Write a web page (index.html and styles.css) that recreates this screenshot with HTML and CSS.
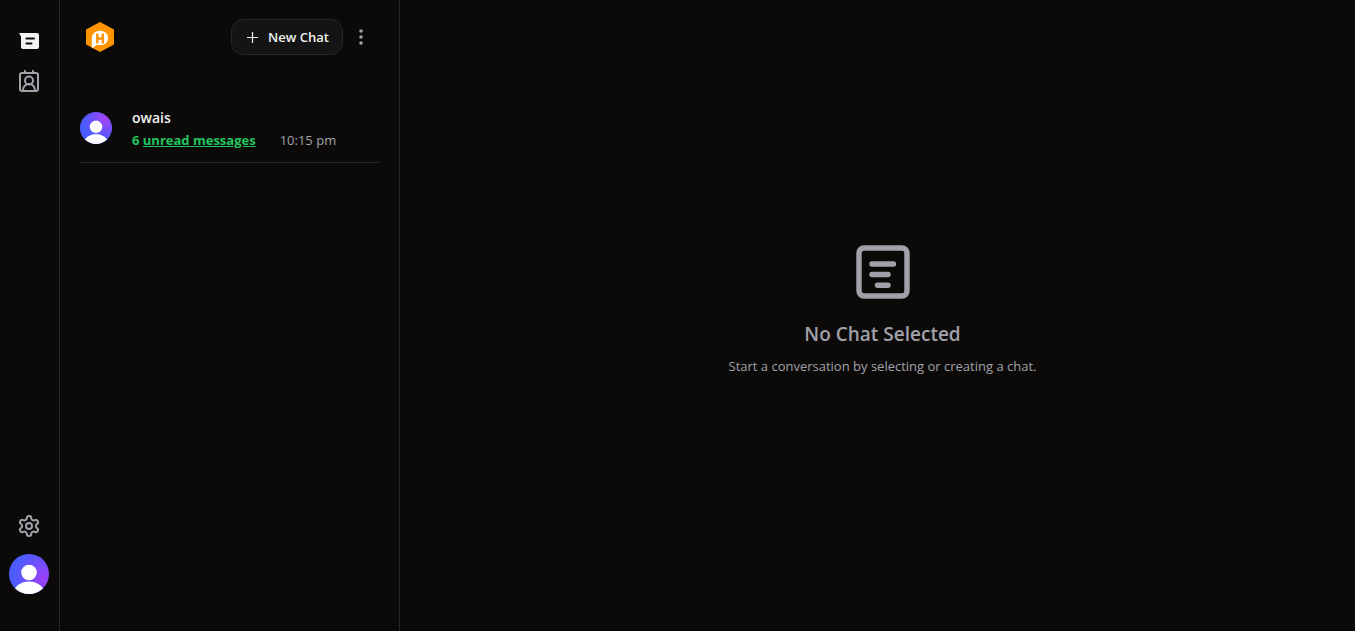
FILE: index.html
```html
<!DOCTYPE html>
<html lang="en">
<head>
<meta charset="utf-8">
<meta name="viewport" content="width=device-width, initial-scale=1">
<title>Chats</title>
<link rel="stylesheet" href="styles.css">
</head>
<body>
<div class="app">
  <nav class="rail" aria-label="Main">
    <a class="rail-link active" href="#chats" aria-label="Chats">
      <svg width="24" height="24" viewBox="0 0 24 24"><path fill="currentColor" d="M2 4h18a2 2 0 0 1 2 2v12a2 2 0 0 1-2 2H6a2 2 0 0 1-2-2V7.500z"/><path d="M9.500 9.500h7.500M9.500 14.500h5" fill="none" stroke="#0c0a09" stroke-width="2" stroke-linecap="round"/></svg>
    </a>
    <a class="rail-link" href="#contacts" aria-label="Contacts">
      <svg width="24" height="24" viewBox="0 0 24 24" fill="none" stroke="currentColor" stroke-width="2" stroke-linecap="round" stroke-linejoin="round"><rect x="3" y="4" width="18" height="18" rx="2"/><path d="M8 2v2M16 2v2M6 22v-1a6 6 0 0 1 12 0v1"/><circle cx="12" cy="11.500" r="4"/></svg>
    </a>
    <a class="rail-link settings" href="#settings" aria-label="Settings">
      <svg width="24" height="24" viewBox="0 0 24 24" fill="none" stroke="currentColor" stroke-width="2" stroke-linejoin="round"><path d="M12.220 2h-.44a2 2 0 0 0-2 2v.18a2 2 0 0 1-1 1.730l-.43.25a2 2 0 0 1-2 0l-.15-.08a2 2 0 0 0-2.730.73l-.22.38a2 2 0 0 0 .73 2.730l.15.1a2 2 0 0 1 1 1.720v.51a2 2 0 0 1-1 1.740l-.15.09a2 2 0 0 0-.73 2.730l.22.38a2 2 0 0 0 2.730.73l.15-.08a2 2 0 0 1 2 0l.43.25a2 2 0 0 1 1 1.730V20a2 2 0 0 0 2 2h.44a2 2 0 0 0 2-2v-.18a2 2 0 0 1 1-1.730l.43-.25a2 2 0 0 1 2 0l.15.08a2 2 0 0 0 2.730-.73l.22-.39a2 2 0 0 0-.73-2.730l-.15-.08a2 2 0 0 1-1-1.740v-.5a2 2 0 0 1 1-1.740l.15-.09a2 2 0 0 0 .73-2.730l-.22-.38a2 2 0 0 0-2.730-.73l-.15.08a2 2 0 0 1-2 0l-.43-.25a2 2 0 0 1-1-1.730V4a2 2 0 0 0-2-2z"/><circle cx="12" cy="12" r="3"/></svg>
    </a>
    <button class="profile" type="button" aria-label="Your profile">
      <svg width="40" height="40" viewBox="0 0 40 40"><defs><radialGradient id="me" cx="0.850" cy="0.600" r="0.750"><stop offset="0" stop-color="#9d40f8"/><stop offset="1" stop-color="#4a5cff"/></radialGradient><clipPath id="meClip"><circle cx="20" cy="20" r="20"/></clipPath></defs><g clip-path="url(#meClip)"><rect width="40" height="40" fill="url(#me)"/><circle cx="20" cy="18.500" r="7.800" fill="#fff"/><ellipse cx="20" cy="39" rx="15" ry="11.500" fill="#fff"/></g></svg>
    </button>
  </nav>

  <aside class="chats">
    <header class="chats-head">
      <svg class="logo" width="40" height="40" viewBox="0 0 40 40" role="img" aria-label="Logo"><path fill="#ff9500" d="M20 5l14 7.500v15L20 35 6 27.500v-15z"/><ellipse cx="20" cy="21" rx="8.200" ry="7.300" fill="#fff"/><path fill="#fff" d="M11.800 21v10.500l5.500-4z"/><path d="M17.300 16.500v10M22.900 16.500v10M17.300 21.500h5.600" fill="none" stroke="#ff9500" stroke-width="2.400"/></svg>
      <div class="actions">
        <button class="new-chat" type="button"><svg width="14" height="14" viewBox="0 0 14 14"><path d="M7.500 2v11M2 7.500h11" stroke="currentColor" stroke-width="1.200" fill="none"/></svg>New Chat</button>
        <button class="more" type="button" aria-label="More options"><svg width="24" height="24" viewBox="0 0 24 24" fill="currentColor"><circle cx="12" cy="6" r="1.800"/><circle cx="12" cy="12" r="1.800"/><circle cx="12" cy="18" r="1.800"/></svg></button>
      </div>
    </header>
    <a class="chat" href="#owais">
      <svg width="32" height="32" viewBox="0 0 40 40"><defs><radialGradient id="them" cx="0.800" cy="0.200" r="0.700"><stop offset="0" stop-color="#a344f8"/><stop offset="1" stop-color="#4a5cff"/></radialGradient></defs><g clip-path="url(#meClip)"><rect width="40" height="40" fill="url(#them)"/><circle cx="20" cy="18.500" r="7.800" fill="#fff"/><ellipse cx="20" cy="39" rx="15" ry="11.500" fill="#fff"/></g></svg>
      <span class="chat-body">
        <span class="name">owais</span>
        <span class="meta"><span class="unread">6 <u>unread messages</u></span><time class="time">10:15 pm</time></span>
      </span>
    </a>
  </aside>

  <main class="empty">
    <svg width="64" height="64" viewBox="0 0 64 64" fill="none" stroke="currentColor" stroke-linecap="round"><rect x="8" y="8" width="48" height="48" rx="5" stroke-width="5.400"/><path d="M21 24h21.500M21 34.500h16M26.500 45.300h10.500" stroke-width="5.400"/></svg>
    <h1>No Chat Selected</h1>
    <p>Start a conversation by selecting or creating a chat.</p>
  </main>
</div>
</body>
</html>
```
FILE: styles.css
```css
* { box-sizing: border-box; }

body {
  margin: 0;
  background: #0c0a09;
  color: #f2f2f2;
  font-family: "Segoe UI", "Open Sans", "Noto Sans", sans-serif;
  font-size: 13px;
  line-height: 20px;
}

svg { display: block; flex: none; }
a { color: inherit; text-decoration: none; }
button { border: 0; padding: 0; background: none; color: inherit; font: inherit; cursor: pointer; }

.app { display: flex; min-height: 100vh; }

.rail {
  display: flex;
  flex-direction: column;
  align-items: center;
  gap: 16px;
  width: 60px;
  padding: 29px 1px 37px 0;
  border-right: 1px solid #27272a;
}
.rail-link { color: #a1a1aa; }
.rail-link.active { color: #f2f2f2; }
.settings { margin-top: auto; }
.profile { border-radius: 50%; }

.chats {
  width: 340px;
  padding: 17px 20px;
  border-right: 1px solid #27272a;
}
.chats-head { display: flex; align-items: center; justify-content: space-between; }
.actions { display: flex; align-items: center; gap: 6px; padding-right: 6px; }
.new-chat {
  display: flex;
  align-items: center;
  justify-content: center;
  gap: 9px;
  width: 112px;
  height: 36px;
  border: 1px solid #27272a;
  border-radius: 12px;
  background: #141414;
  font-weight: 600;
}
.more { color: #a1a1aa; }

.chat {
  display: flex;
  align-items: flex-start;
  gap: 20px;
  margin-top: 51px;
  padding: 4px 0 12px;
  border-bottom: 1px solid #27272a;
}
.chat-body { display: flex; flex-direction: column; gap: 2px; margin-top: -4px; }
.name { font-size: 14px; font-weight: 600; }
.meta { display: flex; gap: 24px; }
.unread { color: #22c55e; font-weight: 700; }
.time { color: #a1a1aa; }

.empty {
  flex: 1;
  display: flex;
  flex-direction: column;
  align-items: center;
  justify-content: center;
  padding: 0 0 16px 10px;
  color: #a1a1aa;
}
h1 { margin: 16px 0 8px; font-size: 19px; line-height: 28px; font-weight: 600; }
p { margin: 0; }
```
